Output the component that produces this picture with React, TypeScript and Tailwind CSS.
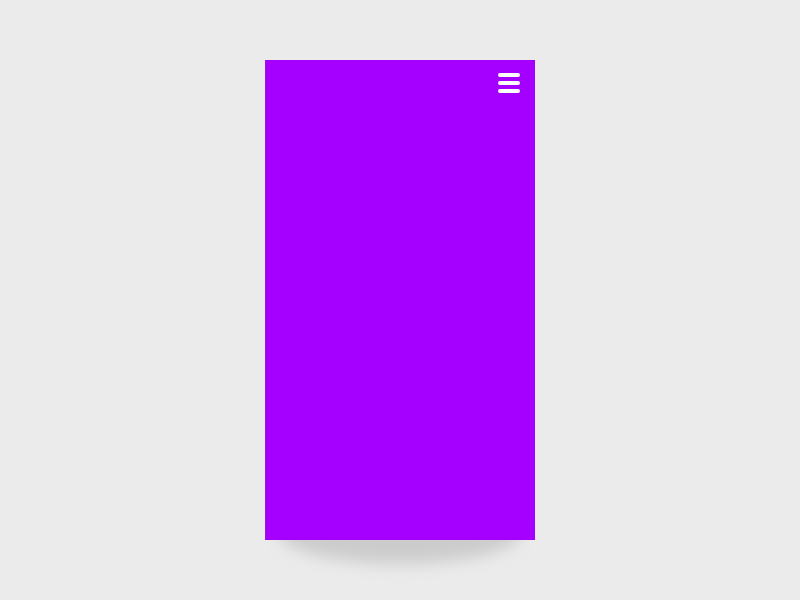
export default function App() {
  return (
    <div className="w-[800px] h-[600px] bg-[#ebebeb] flex justify-center pt-[60px]">
      <div className="relative w-[270px] h-[480px]">
        <div className="absolute left-[14px] right-[14px] top-[440px] h-[64px] rounded-[50%] bg-[#c4c4c4] blur-[8px] opacity-80" />
        <div className="relative w-full h-full bg-[#a500ff] border-l border-[#9a18d8] flex justify-end">
          <div className="mt-[13px] mr-[15px] flex flex-col gap-[4px] w-[22px]">
            <span className="block h-[4px] rounded-full bg-white" />
            <span className="block h-[4px] rounded-full bg-white" />
            <span className="block h-[4px] rounded-full bg-white" />
          </div>
        </div>
      </div>
    </div>
  );
}
